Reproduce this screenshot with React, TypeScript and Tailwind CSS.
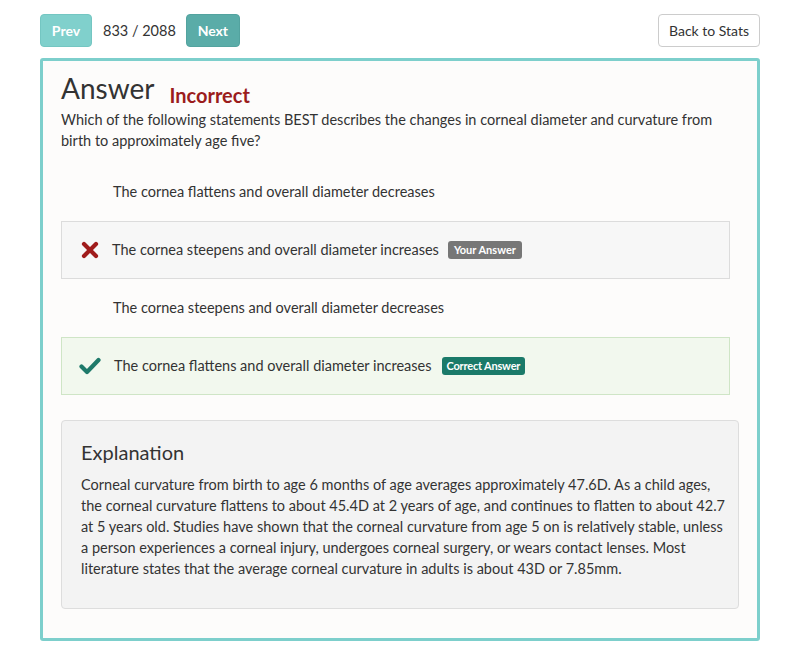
import React from 'react';

type Option = {
  text: string;
  state: 'none' | 'wrong' | 'correct';
};

const options: Option[] = [
  { text: 'The cornea flattens and overall diameter decreases', state: 'none' },
  { text: 'The cornea steepens and overall diameter increases', state: 'wrong' },
  { text: 'The cornea steepens and overall diameter decreases', state: 'none' },
  { text: 'The cornea flattens and overall diameter increases', state: 'correct' },
];

function CrossIcon() {
  return (
    <svg width="18" height="18" viewBox="0 0 18 18">
      <path d="M3 3 L15 15 M15 3 L3 15" stroke="#a01c1c" strokeWidth="4.2" strokeLinecap="round" />
    </svg>
  );
}

function CheckIcon() {
  return (
    <svg width="22" height="18" viewBox="0 0 22 18">
      <path d="M2.5 9.5 L8 15 L19.5 3" stroke="#1f7a6a" strokeWidth="4.2" strokeLinecap="round" strokeLinejoin="round" fill="none" />
    </svg>
  );
}

function OptionRow({ opt }: { opt: Option }) {
  const box =
    opt.state === 'wrong'
      ? 'bg-[#f7f7f7] border border-[#dcdcdc]'
      : opt.state === 'correct'
      ? 'bg-[#f2f8ee] border border-[#cfe5c6]'
      : 'border border-transparent';
  return (
    <div className={`h-[58px] flex items-center pl-[17px] pr-4 ${box}`}>
      <div className="w-[22px] flex justify-center shrink-0">
        {opt.state === 'wrong' && <CrossIcon />}
        {opt.state === 'correct' && <CheckIcon />}
      </div>
      <span className={`text-[14.5px] text-[#333] ${opt.state === 'none' ? 'ml-[12px]' : opt.state === 'wrong' ? 'ml-[11px]' : 'ml-[13px]'}`}>
        {opt.text}
      </span>
      {opt.state === 'wrong' && (
        <span className="ml-[9px] bg-[#777] text-white text-[11px] font-bold px-[6px] leading-[18px] rounded-[3px]">Your Answer</span>
      )}
      {opt.state === 'correct' && (
        <span className="ml-[10px] bg-[#1b7a69] text-white text-[11px] font-bold px-[5px] leading-[18px] rounded-[3px] tracking-[-0.2px]">Correct Answer</span>
      )}
    </div>
  );
}

export default function App() {
  return (
    <div className="w-[800px] h-[666px] bg-white font-['Lato','Noto_Sans',sans-serif] text-[#333]">
      <div className="px-[40px] pt-[14px]">
        <div className="flex items-center justify-between h-[33px]">
          <div className="flex items-center">
            <button className="h-[33px] w-[52px] rounded-[4px] bg-[#80d0cc] border border-[#74c6c2] text-white text-[14px] font-bold">
              Prev
            </button>
            <span className="ml-[11px] text-[14.5px] text-[#333]">833 / 2088</span>
            <button className="ml-[10px] h-[33px] w-[54px] rounded-[4px] bg-[#5aaca8] border border-[#53a39f] text-white text-[14px] font-bold">
              Next
            </button>
          </div>
          <button className="h-[33px] w-[102px] rounded-[4px] bg-white border border-[#cccccc] text-[#333] text-[14px]">
            Back to Stats
          </button>
        </div>

        <div className="mt-[11px] h-[583px] border-[3px] border-[#7dcfcc] rounded-[3px] bg-[#fdfcfb] px-[18px] pt-[9px]">
          <div className="flex items-end">
            <h1 className="text-[28px] leading-[36px] text-[#333]">Answer</h1>
            <span className="ml-[15px] mb-[-4px] text-[20px] font-bold text-[#9b1c1c]">Incorrect</span>
          </div>
          <p className="mt-[3px] text-[14.5px] leading-[21px] text-[#333] pr-[20px]">
            Which of the following statements BEST describes the changes in corneal diameter and curvature from birth to approximately age five?
          </p>

          <div className="mt-[12px] w-[669px]">
            {options.map((opt, i) => (
              <OptionRow key={i} opt={opt} />
            ))}
          </div>

          <div className="mt-[25px] w-[678px] h-[189px] bg-[#f3f3f3] border border-[#dddddd] rounded-[4px] pl-[19px] pr-[12px] pt-[18px]">
            <h2 className="text-[20px] leading-[26px] text-[#333]">Explanation</h2>
            <p className="mt-[9px] text-[14.5px] leading-[21px] text-[#333]">
              Corneal curvature from birth to age 6 months of age averages approximately 47.6D. As a child ages, the corneal curvature flattens to about 45.4D at 2 years of age, and continues to flatten to about 42.7 at 5 years old. Studies have shown that the corneal curvature from age 5 on is relatively stable, unless a person experiences a corneal injury, undergoes corneal surgery, or wears contact lenses. Most literature states that the average corneal curvature in adults is about 43D or 7.85mm.
            </p>
          </div>
        </div>
      </div>
    </div>
  );
}
